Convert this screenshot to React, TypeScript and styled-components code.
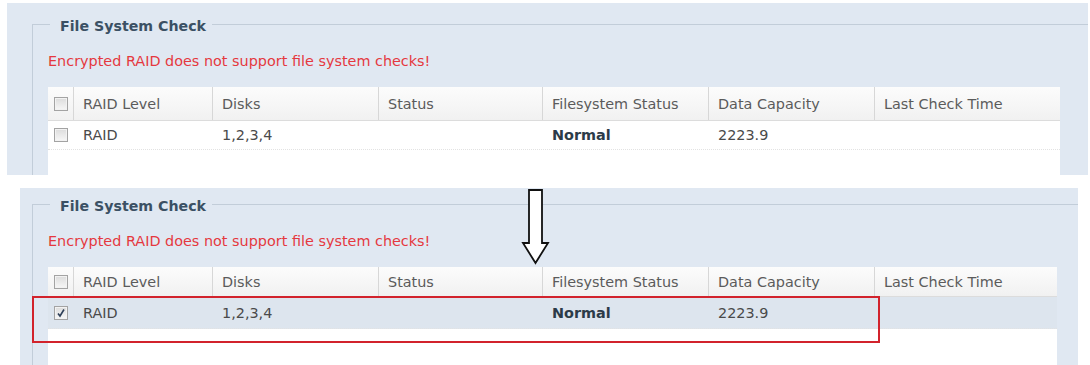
import React from "react";
import styled, { createGlobalStyle } from "styled-components";

const Global = createGlobalStyle`
  html, body { margin: 0; padding: 0; background: #ffffff; }
  body { font-family: "DejaVu Sans", Tahoma, sans-serif; }
`;

const Page = styled.div`
  position: relative;
  width: 1090px;
  height: 365px;
  overflow: hidden;
  background: #ffffff;
  display: flex;
  flex-direction: column;
`;

const Shot = styled.div<{ $top: number; $left: number; $width: number; $height: number; $padTop: number; $padLeft: number }>`
  margin: ${(p) => p.$top}px 0 0 ${(p) => p.$left}px;
  width: ${(p) => p.$width}px;
  height: ${(p) => p.$height}px;
  flex: none;
  box-sizing: border-box;
  padding: ${(p) => p.$padTop}px 0 0 ${(p) => p.$padLeft}px;
  background: #e0e8f2;
  overflow: hidden;
`;

const Frame = styled.fieldset<{ $padRight: number }>`
  margin: 0;
  min-width: 0;
  padding: 0 ${(p) => p.$padRight}px 0 15px;
  border: none;
  border-top: 1px solid #c2cdd9;
  border-left: 1px solid #c2cdd9;
`;

const Legend = styled.legend`
  margin-left: 2px;
  padding: 4px 6px 0 10px;
  font-family: "DejaVu Sans", Tahoma, sans-serif;
  font-weight: bold;
  font-size: 14.2px;
  line-height: 18px;
  color: #3b5064;
`;

const Message = styled.div`
  margin-top: 17px;
  font-size: 14.4px;
  line-height: 18px;
  color: #e5383f;
  white-space: nowrap;
`;

const Grid = styled.div<{ $last: number }>`
  display: grid;
  grid-template-columns: 26px 139px 166px 164px 166px 166px ${(p) => p.$last}px;
`;

const Table = styled.div`
  margin-top: 17px;
  background: #ffffff;
  min-height: 140px;
`;

const HeadRow = styled(Grid)<{ $h: number }>`
  height: ${(p) => p.$h}px;
  background: linear-gradient(#fcfcfc, #f1f1f1);
  border-bottom: 1px solid #dcdcdc;
  box-sizing: border-box;
`;

const HeadCell = styled.div`
  display: flex;
  align-items: center;
  padding-left: 9px;
  border-right: 1px solid #d7d7d7;
  font-size: 14.4px;
  color: #5b5b5b;
  white-space: nowrap;
  overflow: hidden;
  &:last-child { border-right: none; }
`;

const BoxCell = styled.div<{ $divider?: boolean }>`
  display: flex;
  align-items: center;
  justify-content: center;
  border-right: ${(p) => (p.$divider ? "1px solid #d7d7d7" : "none")};
`;

const DataRow = styled(Grid)<{ $h: number; $selected?: boolean }>`
  position: relative;
  height: ${(p) => p.$h}px;
  background: ${(p) => (p.$selected ? "#dde5ee" : "#ffffff")};
  border-bottom: 1px dotted #e2e2e2;
  box-sizing: border-box;
`;

const Cell = styled.div<{ $bold?: boolean }>`
  display: flex;
  align-items: center;
  padding-left: 9px;
  font-size: 14.4px;
  font-weight: ${(p) => (p.$bold ? "bold" : "normal")};
  color: ${(p) => (p.$bold ? "#2c3b48" : "#4a4a4a")};
  white-space: nowrap;
`;

const Check = styled.span`
  width: 14px;
  height: 14px;
  box-sizing: border-box;
  border: 1px solid #a3a3a3;
  background: linear-gradient(#dcdcdc, #f7f7f7);
  box-shadow: inset 0 0 0 1px #f2f2f2;
  display: flex;
  align-items: center;
  justify-content: center;
`;

const Highlight = styled.div<{ $w: number; $h: number }>`
  position: absolute;
  left: -16px;
  top: -1px;
  width: ${(p) => p.$w}px;
  height: ${(p) => p.$h}px;
  box-sizing: border-box;
  border: 2px solid #d2232c;
  pointer-events: none;
`;

const Arrow = styled.svg`
  position: absolute;
  left: 520px;
  top: 188px;
`;

function CheckBox({ checked }: { checked?: boolean }) {
  return (
    <Check>
      {checked && (
        <svg width="10" height="10" viewBox="0 0 10 10">
          <path d="M2 5.5 L4 8 L8 1.5" fill="none" stroke="#2d3f58" strokeWidth="1.6" />
        </svg>
      )}
    </Check>
  );
}

const headers = ["RAID Level", "Disks", "Status", "Filesystem Status", "Data Capacity", "Last Check Time"];

function Panel({ selected, headH, rowH, last, padRight }: { selected?: boolean; headH: number; rowH: number; last: number; padRight: number }) {
  return (
    <Frame $padRight={padRight}>
      <Legend>File System Check</Legend>
      <Message>Encrypted RAID does not support file system checks!</Message>
      <Table>
        <HeadRow $last={last} $h={headH}>
          <BoxCell $divider>
            <CheckBox />
          </BoxCell>
          {headers.map((h) => (
            <HeadCell key={h}>{h}</HeadCell>
          ))}
        </HeadRow>
        <DataRow $last={last} $h={rowH} $selected={selected}>
          <BoxCell>
            <CheckBox checked={selected} />
          </BoxCell>
          <Cell>RAID</Cell>
          <Cell>1,2,3,4</Cell>
          <Cell />
          <Cell $bold>Normal</Cell>
          <Cell>2223.9</Cell>
          <Cell />
          {selected && <Highlight $w={848} $h={47} />}
        </DataRow>
      </Table>
    </Frame>
  );
}

export default function App() {
  return (
    <>
      <Global />
      <Page>
        <Shot $top={3} $left={7} $width={1081} $height={172} $padTop={10} $padLeft={25}>
          <Panel headH={34} rowH={29} last={185} padRight={28} />
        </Shot>
        <Shot $top={13} $left={20} $width={1058} $height={177} $padTop={5} $padLeft={12}>
          <Panel selected headH={30} rowH={32} last={182} padRight={21} />
        </Shot>
        <Arrow width="32" height="78" viewBox="0 0 32 78">
          <polygon
            points="9,2 22,2 22,55 28,55 15.5,75 3,55 9,55"
            fill="#ffffff"
            stroke="#111111"
            strokeWidth="1.8"
            strokeLinejoin="miter"
          />
        </Arrow>
      </Page>
    </>
  );
}
